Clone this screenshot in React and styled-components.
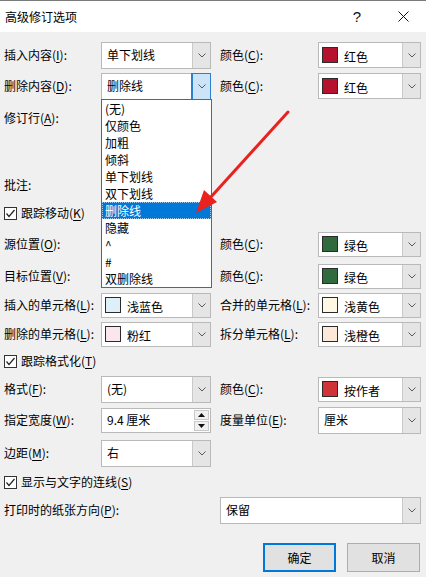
import React from "react";
import styled, { createGlobalStyle } from "styled-components";

const GlobalStyle = createGlobalStyle`
  html, body {
    margin: 0;
    padding: 0;
    background: #f0f0f0;
  }
  body {
    font-family: "Noto Sans CJK SC", "Noto Sans", sans-serif;
    font-size: 12px;
    color: #000;
  }
`;

const Window = styled.div`
  position: relative;
  width: 426px;
  height: 577px;
  background: #f0f0f0;
  border-top: 1px solid #7a7a7a;
  box-sizing: border-box;
  overflow: hidden;
`;

const TitleBar = styled.div`
  height: 31px;
  background: #ffffff;
  display: flex;
  align-items: center;
  padding-left: 5px;
  line-height: 16px;
`;

const Title = styled.div`
  flex: 1;
`;

const TitleButton = styled.div`
  width: 46px;
  height: 31px;
  display: flex;
  align-items: center;
  justify-content: center;
  font-family: "Liberation Sans", sans-serif;
  font-size: 15px;
  color: #111;
`;

const Body = styled.div`
  padding-left: 4px;
  display: flex;
  flex-direction: column;
`;

const Row = styled.div`
  display: flex;
  align-items: center;
  height: ${(p) => p.$h || 28}px;
  margin-top: ${(p) => p.$mt || 0}px;
  line-height: 16px;
`;

const Label = styled.div`
  width: ${(p) => p.$w || 97}px;
  flex-shrink: 0;
  white-space: nowrap;
`;

const Label2 = styled(Label)`
  width: 98px;
  padding-left: 9px;
`;

const Cell = styled.div`
  position: relative;
  width: ${(p) => p.$w || 110}px;
  flex-shrink: 0;
`;

const SelectBox = styled.div`
  display: flex;
  align-items: stretch;
  height: ${(p) => p.$h || 26}px;
  background: #ffffff;
  border: 1px solid #b9b9b9;
  box-sizing: border-box;
`;

const Value = styled.div`
  flex: 1;
  display: flex;
  align-items: center;
  padding-left: ${(p) => (p.$swatch ? 3 : 5)}px;
  gap: 6px;
  overflow: hidden;
  white-space: nowrap;
`;

const Swatch = styled.span`
  width: 14px;
  height: 14px;
  background: ${(p) => p.$color};
  border: 1px solid #2b2b2b;
  flex-shrink: 0;
`;

const SwatchText = styled.span`
  padding-top: 3px;
`;

const ArrowButton = styled.div`
  width: 17px;
  display: flex;
  align-items: center;
  justify-content: center;
  background: ${(p) => (p.$open ? "#cce4f7" : "#e5e5e5")};
  border-left: 1px solid ${(p) => (p.$open ? "#2f7fd1" : "#c9c9c9")};
  outline: ${(p) => (p.$open ? "1px solid #2f7fd1" : "none")};
`;

const List = styled.div`
  position: absolute;
  left: 0;
  top: calc(100% - 1px);
  width: 111px;
  background: #ffffff;
  border: 1px solid #646464;
  box-sizing: border-box;
  z-index: 2;
  padding: 0;
`;

const ListItem = styled.div`
  height: 17px;
  line-height: 17px;
  padding-left: 3px;
  background: ${(p) => (p.$active ? "#0078d7" : "transparent")};
  color: ${(p) => (p.$active ? "#ffffff" : "#000000")};
  outline: ${(p) => (p.$active ? "1px dotted #9fc9ef" : "none")};
  outline-offset: -1px;
  white-space: nowrap;
`;

const CheckRow = styled(Row)`
  gap: 4px;
`;

const CheckBox = styled.span`
  width: 13px;
  height: 13px;
  border: 1px solid #333;
  background: #ffffff;
  box-sizing: border-box;
  display: flex;
  align-items: center;
  justify-content: center;
`;

const SpinBox = styled.div`
  display: flex;
  height: 25px;
  background: #ffffff;
  border: 1px solid #b9b9b9;
  box-sizing: border-box;
`;

const SpinButtons = styled.div`
  width: 15px;
  display: flex;
  flex-direction: column;
  padding: 1px 1px 1px 0;
  gap: 1px;
`;

const SpinButton = styled.div`
  flex: 1;
  background: #f0f0f0;
  border: 1px solid #c9c9c9;
  display: flex;
  align-items: center;
  justify-content: center;
`;

const ButtonRow = styled.div`
  display: flex;
  justify-content: flex-end;
  gap: 11px;
  margin-top: 19px;
  padding-right: 6px;
`;

const Button = styled.button`
  width: 73px;
  height: 29px;
  font-family: inherit;
  font-size: 12px;
  color: #000;
  background: #e1e1e1;
  border: ${(p) => (p.$primary ? "2px solid #0078d7" : "1px solid #adadad")};
  box-sizing: border-box;
  padding: 0;
`;

const Annotation = styled.svg`
  position: absolute;
  left: 0;
  top: 0;
  pointer-events: none;
  z-index: 3;
`;

const Chevron = () => (
  <svg width="8" height="5" viewBox="0 0 8 5">
    <polyline points="0.5,0.5 4,4 7.5,0.5" fill="none" stroke="#5a5a5a" strokeWidth="1" />
  </svg>
);

const Select = ({ value, swatch, h, open, children }) => (
  <SelectBox $h={h}>
    <Value $swatch={!!swatch}>
      {swatch ? (
        <>
          <Swatch $color={swatch} />
          <SwatchText>{value}</SwatchText>
        </>
      ) : (
        value
      )}
    </Value>
    <ArrowButton $open={open}>
      <Chevron />
    </ArrowButton>
    {children}
  </SelectBox>
);

const Check = () => (
  <CheckBox>
    <svg width="11" height="11" viewBox="0 0 11 11">
      <polyline points="1.5,5.5 4,8.5 9.5,2" fill="none" stroke="#222" strokeWidth="1.2" />
    </svg>
  </CheckBox>
);

const K = styled.u`
  text-underline-offset: 2px;
`;

const listItems = ["(无)", "仅颜色", "加粗", "倾斜", "单下划线", "双下划线", "删除线", "隐藏", "^", "#", "双删除线"];

export default function App() {
  return (
    <>
      <GlobalStyle />
      <Window>
        <TitleBar>
          <Title>高级修订选项</Title>
          <TitleButton>?</TitleButton>
          <TitleButton>
            <svg width="11" height="11" viewBox="0 0 11 11">
              <path d="M0.5 0.5 L10.5 10.5 M10.5 0.5 L0.5 10.5" stroke="#111" strokeWidth="1" />
            </svg>
          </TitleButton>
        </TitleBar>

        <Body>
          <Row $mt={9}>
            <Label>插入内容(<K>I</K>):</Label>
            <Cell><Select value="单下划线" h={27} /></Cell>
            <Label2>颜色(<K>C</K>):</Label2>
            <Cell $w={103}><Select value="红色" swatch="#b5122f" /></Cell>
          </Row>

          <Row $mt={3}>
            <Label>删除内容(<K>D</K>):</Label>
            <Cell>
              <Select value="删除线" h={27} open />
              <List>
                {listItems.map((t) => (
                  <ListItem key={t} $active={t === "删除线"}>{t}</ListItem>
                ))}
              </List>
            </Cell>
            <Label2>颜色(<K>C</K>):</Label2>
            <Cell $w={103}><Select value="红色" swatch="#b5122f" /></Cell>
          </Row>

          <Row $mt={4}>
            <Label>修订行(<K>A</K>):</Label>
          </Row>

          <Row $mt={43} $h={20}>
            <Label>批注:</Label>
          </Row>

          <CheckRow $mt={8} $h={20}>
            <Check />
            <span>跟踪移动(<K>K</K>)</span>
          </CheckRow>

          <Row $mt={8} $h={26}>
            <Label>源位置(<K>O</K>):</Label>
            <Cell />
            <Label2>颜色(<K>C</K>):</Label2>
            <Cell $w={103}><Select value="绿色" swatch="#2f6b3c" h={25} /></Cell>
          </Row>

          <Row $mt={6} $h={26}>
            <Label>目标位置(<K>V</K>):</Label>
            <Cell />
            <Label2>颜色(<K>C</K>):</Label2>
            <Cell $w={103}><Select value="绿色" swatch="#2f6b3c" h={25} /></Cell>
          </Row>

          <Row $mt={3} $h={26}>
            <Label>插入的单元格(<K>L</K>):</Label>
            <Cell><Select value="浅蓝色" swatch="#deeff7" h={25} /></Cell>
            <Label2>合并的单元格(<K>L</K>):</Label2>
            <Cell $w={103}><Select value="浅黄色" swatch="#fdf7e3" h={25} /></Cell>
          </Row>

          <Row $mt={3} $h={26}>
            <Label>删除的单元格(<K>L</K>):</Label>
            <Cell><Select value="粉红" swatch="#fbe5ef" h={25} /></Cell>
            <Label2>拆分单元格(<K>L</K>):</Label2>
            <Cell $w={103}><Select value="浅橙色" swatch="#fde7d9" h={25} /></Cell>
          </Row>

          <CheckRow $mt={4} $h={20}>
            <Check />
            <span>跟踪格式化(<K>T</K>)</span>
          </CheckRow>

          <Row $mt={4}>
            <Label>格式(<K>F</K>):</Label>
            <Cell><Select value="(无)" h={27} /></Cell>
            <Label2>颜色(<K>C</K>):</Label2>
            <Cell $w={103}><Select value="按作者" swatch="#d13438" h={25} /></Cell>
          </Row>

          <Row $mt={4} $h={26}>
            <Label>指定宽度(<K>W</K>):</Label>
            <Cell>
              <SpinBox>
                <Value>9.4 厘米</Value>
                <SpinButtons>
                  <SpinButton>
                    <svg width="7" height="4" viewBox="0 0 7 4"><polygon points="0,4 3.5,0 7,4" fill="#111" /></svg>
                  </SpinButton>
                  <SpinButton>
                    <svg width="7" height="4" viewBox="0 0 7 4"><polygon points="0,0 7,0 3.5,4" fill="#111" /></svg>
                  </SpinButton>
                </SpinButtons>
              </SpinBox>
            </Cell>
            <Label2>度量单位(<K>E</K>):</Label2>
            <Cell $w={103}><Select value="厘米" h={27} /></Cell>
          </Row>

          <Row $mt={6}>
            <Label>边距(<K>M</K>):</Label>
            <Cell><Select value="右" h={27} /></Cell>
          </Row>

          <CheckRow $mt={5} $h={20}>
            <Check />
            <span>显示与文字的连线(<K>S</K>)</span>
          </CheckRow>

          <Row $mt={4}>
            <Label $w={216}>打印时的纸张方向(<K>P</K>):</Label>
            <Cell $w={201}><Select value="保留" h={27} /></Cell>
          </Row>

          <ButtonRow>
            <Button $primary>确定</Button>
            <Button>取消</Button>
          </ButtonRow>
        </Body>

        <Annotation width="426" height="577" viewBox="0 0 426 577">
          <line x1="288" y1="111" x2="210" y2="197" stroke="#e8221e" strokeWidth="3" strokeLinecap="round" />
          <polygon points="196,212 204,189 217,201" fill="#e8221e" />
        </Annotation>
      </Window>
    </>
  );
}
